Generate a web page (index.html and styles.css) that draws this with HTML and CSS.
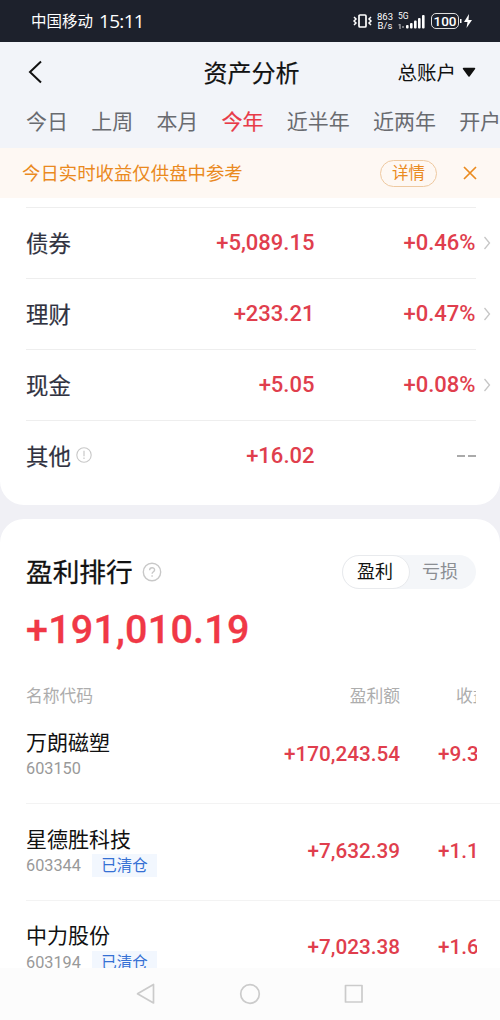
FILE: index.html
```html
<!DOCTYPE html>
<html lang="zh-CN">

<head>
    <meta charset="UTF-8">
    <meta name="viewport" content="width=device-width, initial-scale=1.0">
    <title>资产分析</title>
    <link rel="stylesheet" href="styles.css">
</head>

<body>
    <div class="status">
        <span class="carrier">中国移动</span>
        <span class="time">15:11</span>
        <div class="status-icons">
            <svg class="vibrate" width="20" height="16" viewBox="0 0 20 16" fill="none" stroke="#fff">
                <rect x="6" y="2" width="7" height="12" rx="1" stroke-width="1.7" />
                <path d="M1 4l2 2-2 2 2 2-2 2M18 4l-2 2 2 2-2 2 2 2" stroke-width="1.5" />
            </svg>
            <div class="speed">863<br>B/s</div>
            <div class="signal">
                <span>5G</span>
                <svg width="28" height="16" viewBox="0 0 28 16" fill="#fff">
                    <path d="M2.500 11v5h-1v-4l-1 .5v-1zM4.500 13h1v2h-1z" opacity=".8" />
                    <rect x="8" y="12" width="2.6" height="3.5" rx="1" />
                    <rect x="12" y="10" width="2.6" height="5.5" rx="1" />
                    <rect x="16" y="7.5" width="2.6" height="8" rx="1" />
                    <rect x="20" y="5" width="2.6" height="10.5" rx="1" />
                    <rect x="24" y="2" width="2.6" height="13.5" rx="1" />
                </svg>
            </div>
            <div class="battery">100</div>
            <svg class="bolt" width="13" height="16" viewBox="0 0 13 16" fill="#fff">
                <path d="M0 6h1.500v4H0zM9 1L4 9h3.500L6.500 15 12 7H8.500z" />
            </svg>
        </div>
    </div>

    <header>
        <svg class="back" width="16" height="24" viewBox="0 0 16 24" fill="none" stroke="#111" stroke-width="2">
            <path d="M14 1.500L3 12l11 10.500" />
        </svg>
        <h1>资产分析</h1>
        <div class="account"><span>总账户</span>
            <svg width="14" height="11" viewBox="0 0 14 11">
                <path d="M1.500 1.500h11L7 9z" fill="#111" stroke="#111" stroke-width="1.5" stroke-linejoin="round" />
            </svg>
        </div>
    </header>

    <nav class="tabs">
        <span>今日</span>
        <span>上周</span>
        <span>本月</span>
        <span class="active">今年</span>
        <span>近半年</span>
        <span>近两年</span>
        <span>开户</span>
    </nav>

    <div class="notice">
        <p>今日实时收益仅供盘中参考</p>
        <button>详情</button>
        <svg width="14" height="14" viewBox="0 0 14 14" fill="none" stroke="#ea8a1f" stroke-width="1.7">
            <path d="M1 1l12 12M13 1L1 13" />
        </svg>
    </div>

    <main>
        <section class="card assets">
            <div class="asset">
                <span class="label">债券</span>
                <span class="num">+5,089.15</span>
                <span class="num rate">+0.46%</span>
                <svg class="arrow" width="8" height="14" viewBox="0 0 8 14"><path d="M1.500 1l5 6-5 6" /></svg>
            </div>
            <div class="asset">
                <span class="label">理财</span>
                <span class="num">+233.21</span>
                <span class="num rate">+0.47%</span>
                <svg class="arrow" width="8" height="14" viewBox="0 0 8 14"><path d="M1.500 1l5 6-5 6" /></svg>
            </div>
            <div class="asset">
                <span class="label">现金</span>
                <span class="num">+5.05</span>
                <span class="num rate">+0.08%</span>
                <svg class="arrow" width="8" height="14" viewBox="0 0 8 14"><path d="M1.500 1l5 6-5 6" /></svg>
            </div>
            <div class="asset">
                <span class="label">其他
                    <svg width="16" height="16" viewBox="0 0 16 16" fill="none" stroke="#c8c8c8">
                        <circle cx="8" cy="8" r="7.2" stroke-width="1.1" />
                        <path d="M8 3.800v5.400M8 10.600v1.500" stroke-width="1.2" />
                    </svg>
                </span>
                <span class="num">+16.02</span>
                <span class="rate none"><i></i><i></i></span>
            </div>
        </section>

        <section class="card ranking">
            <div class="ranking-title">
                <h2>盈利排行</h2>
                <svg width="20" height="20" viewBox="0 0 20 20" fill="none" stroke="#c8c8c8">
                    <circle cx="10" cy="10" r="8.7" stroke-width="1.4" />
                    <path d="M7.600 8.300c0-3.500 5-3.300 5-.4 0 1.800-2.500 1.900-2.500 3.900M10.100 13.200v1.500" stroke-width="1.4" />
                </svg>
                <div class="switch">
                    <span class="on">盈利</span>
                    <span>亏损</span>
                </div>
            </div>
            <div class="total">+191,010.19</div>

            <div class="row head">
                <div class="name">名称代码</div>
                <div class="amount">盈利额</div>
                <div class="percent">收益</div>
            </div>
            <div class="row">
                <div class="name">
                    <h3>万朗磁塑</h3>
                    <div class="code">603150</div>
                </div>
                <div class="amount">+170,243.54</div>
                <div class="percent">+9.3</div>
            </div>
            <div class="row">
                <div class="name">
                    <h3>星德胜科技</h3>
                    <div class="code">603344 <span class="tag">已清仓</span></div>
                </div>
                <div class="amount">+7,632.39</div>
                <div class="percent">+1.1</div>
            </div>
            <div class="row">
                <div class="name">
                    <h3>中力股份</h3>
                    <div class="code">603194 <span class="tag">已清仓</span></div>
                </div>
                <div class="amount">+7,023.38</div>
                <div class="percent">+1.6</div>
            </div>
        </section>
    </main>

    <footer>
        <svg width="20" height="22" viewBox="0 0 20 22"><path d="M17.500 1.500v18.500L1.500 10.800z" /></svg>
        <svg width="22" height="22" viewBox="0 0 22 22"><circle cx="11" cy="11" r="9.3" /></svg>
        <svg width="20" height="20" viewBox="0 0 20 20"><rect x="1.5" y="1.5" width="16.5" height="16.5" /></svg>
    </footer>
</body>

</html>
```
FILE: styles.css
```css
* {
    margin: 0;
    padding: 0;
    box-sizing: border-box;
}

body {
    height: 1020px;
    width: 500px;
    display: flex;
    flex-direction: column;
    overflow: hidden;
    background-color: #f2f4f9;
    font-family: Roboto, "Noto Sans CJK SC", sans-serif;
    white-space: nowrap;
}

.status {
    height: 42px;
    flex: none;
    display: flex;
    align-items: center;
    padding: 0 27px 0 31px;
    background-color: #1d212c;
    color: white;
}

.carrier {
    padding-bottom: 2px;
    font-size: 15.5px;
}

.time {
    margin-left: 6px;
    font-size: 19px;
    font-weight: 500;
    font-family: "Open Sans", sans-serif;
    letter-spacing: -0.7px;
}

.status-icons {
    margin-left: auto;
    display: flex;
    align-items: center;
}

.speed {
    margin-left: 4px;
    font-size: 9.5px;
    line-height: 9px;
    text-align: center;
}

.signal {
    position: relative;
    height: 16px;
    margin-left: 5px;
}

.signal svg {
    display: block;
}

.signal span {
    position: absolute;
    top: -1px;
    left: 0;
    font-size: 8.5px;
    line-height: 9px;
}

.battery {
    width: 28px;
    height: 16px;
    margin: 0 1px 0 5px;
    border: 1.5px solid #ddd;
    border-radius: 5px;
    font-size: 13.5px;
    line-height: 14px;
    font-weight: 500;
    text-align: center;
}

header {
    height: 60px;
    flex: none;
    display: grid;
    grid-template-columns: 1fr auto 1fr;
    align-items: center;
    padding: 0 24px 0 27px;
}

h1 {
    padding-bottom: 2px;
    font-size: 24px;
    font-weight: 400;
    color: #111;
    -webkit-text-stroke: 0.2px;
}

.account {
    display: flex;
    align-items: center;
    justify-content: flex-end;
    gap: 6px;
    font-size: 19.5px;
    color: #111;
}

.account span {
    padding-bottom: 2px;
}

.tabs {
    height: 46px;
    flex: none;
    display: flex;
    gap: 23.2px;
    padding-left: 26px;
    line-height: 40px;
    font-size: 21px;
    color: #696b70;
    overflow: hidden;
}

.tabs span {
    flex: none;
}

.tabs .active {
    color: #e83a48;
    -webkit-text-stroke: 0.2px;
}

.notice {
    height: 50px;
    flex: none;
    display: flex;
    align-items: center;
    padding: 0 23px 0 22px;
    background-color: #fef8f3;
    color: #ea8a1f;
}

.notice p {
    padding-bottom: 2px;
    font-size: 18.4px;
}

.notice button {
    width: 57px;
    height: 27px;
    margin: 0 26px 0 auto;
    border: 1px solid #eec9a0;
    border-radius: 14px;
    background: none;
    color: #ea8a1f;
    font-family: inherit;
    font-size: 16.5px;
    line-height: 25px;
}

main {
    flex: 1;
    min-height: 0;
    overflow: hidden;
    background-color: #f0f0f5;
}

.card {
    background-color: white;
}

.assets {
    padding: 9px 9px 14px 26px;
    border-radius: 0 0 24px 24px;
}

.asset {
    height: 71px;
    display: grid;
    grid-template-columns: 150px 138.5px 161px 15.5px;
    align-items: center;
    background: linear-gradient(#eee, #eee) 0 0 / 450px 1px no-repeat;
}

.label {
    display: flex;
    align-items: center;
    gap: 5px;
    padding-bottom: 2px;
    font-size: 22.4px;
    color: #30323f;
    -webkit-text-stroke: 0.2px;
}

.label svg {
    margin-top: 1px;
}

.num {
    font-size: 22px;
    font-weight: 500;
    text-align: right;
    color: #e03e4d;
}

.arrow {
    justify-self: end;
    fill: none;
    stroke: #c6c6c6;
    stroke-width: 1.3;
}

.none {
    display: flex;
    justify-content: flex-end;
    gap: 3px;
}

.none i {
    width: 8px;
    height: 2px;
    background-color: #aaa;
}

.ranking {
    height: 500px;
    margin-top: 14px;
    padding: 36px 0 0 26px;
    border-radius: 24px 24px 0 0;
}

.ranking-title {
    height: 34px;
    display: flex;
    align-items: center;
    padding-right: 24px;
}

h2 {
    margin-right: 9px;
    padding-bottom: 3px;
    font-size: 26.7px;
    font-weight: 400;
    color: #111;
    -webkit-text-stroke: 0.3px;
}

.switch {
    height: 34px;
    margin-left: auto;
    display: flex;
    border-radius: 17px;
    background-color: #f4f6f9;
    font-size: 18px;
    line-height: 34px;
    color: #8b8e93;
}

.switch span {
    width: 66px;
    padding-right: 6px;
    text-align: center;
}

.switch .on {
    width: 68px;
    padding: 0 2px 0 0;
    border: 1px solid #e8eaed;
    border-radius: 17px;
    background-color: white;
    line-height: 32px;
    color: #111;
}

.total {
    margin-top: 13px;
    height: 56px;
    line-height: 56px;
    font-size: 39.5px;
    font-weight: 500;
    letter-spacing: 0.2px;
    color: #f03846;
    -webkit-text-stroke: 0.3px;
}

.row {
    height: 96.8px;
    display: flex;
    align-items: center;
    border-bottom: 1px solid #f3f3f3;
}

.name {
    flex: 1;
}

h3 {
    font-size: 21px;
    line-height: 28px;
    font-weight: 400;
    color: #111;
}

.code {
    height: 24px;
    display: flex;
    align-items: center;
    gap: 11px;
    font-size: 16.3px;
    color: #999;
}

.tag {
    width: 65px;
    height: 23px;
    line-height: 25px;
    background-color: #f2f7fe;
    color: #3570d4;
    font-size: 15.5px;
    text-align: center;
}

.amount,
.percent {
    padding-bottom: 2px;
    font-size: 20.7px;
    font-weight: 500;
    color: #e03e4d;
}

.percent {
    width: 39px;
    margin: 0 23px 0 38px;
    overflow: hidden;
}

.head {
    height: 24px;
    margin-top: 25px;
    border: none;
    line-height: 24px;
}

.head div {
    padding: 1px 0 0;
    font-size: 16.8px;
    font-weight: 400;
    color: #adadad;
}

.head .percent {
    width: 20px;
    margin-left: 56px;
    margin-right: 24px;
}

footer {
    height: 52px;
    flex: none;
    display: flex;
    align-items: center;
    justify-content: center;
    gap: 83px;
    background-color: #fcfcfc;
}

footer svg {
    fill: none;
    stroke: #cbcbcb;
    stroke-width: 1.7;
    stroke-linejoin: round;
}
```
